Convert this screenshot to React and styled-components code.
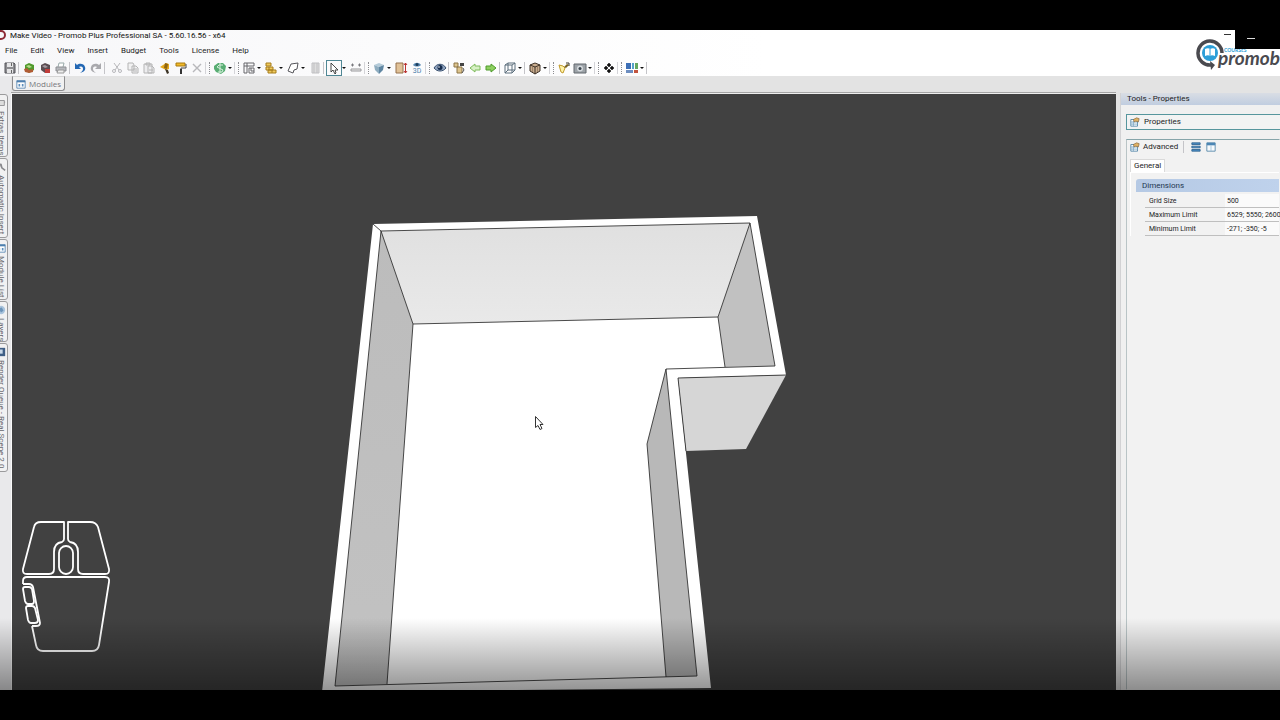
import React from 'react'
import styled, { createGlobalStyle } from 'styled-components'

const GlobalStyle = createGlobalStyle`
  * {
    box-sizing: border-box;
  }
  body {
    margin: 0;
    background: #000;
    font-family: Roboto, "Open Sans", sans-serif;
    font-size: 8px;
    line-height: 12px;
    color: #1c1c1e;
  }
  button {
    font: inherit;
    color: inherit;
    background: none;
    border: none;
    padding: 0;
    margin: 0;
  }
  svg {
    display: block;
    flex: none;
  }
`

const Screen = styled.div`
  height: 100vh;
  padding: 30px 0;
  background: #000;
  overflow: hidden;
`

const Window = styled.div`
  position: relative;
  height: 100%;
  display: flex;
  flex-direction: column;
  background: #e3e3e3;
  overflow: hidden;
`

const Shade = styled.div`
  position: absolute;
  left: 0;
  right: 0;
  bottom: 0;
  height: 72px;
  background: linear-gradient(to bottom, rgba(0, 0, 0, 0), rgba(0, 0, 0, 0.15) 35%, rgba(0, 0, 0, 0.42));
  pointer-events: none;
`

const Header = styled.header`
  position: relative;
  display: flex;
  justify-content: space-between;
  height: 46px;
  background: linear-gradient(to right, #f7f7f9, #fff 60%);
`

const HeaderMain = styled.div`
  display: flex;
  flex-direction: column;
`

const TitleBar = styled.div`
  display: flex;
  align-items: center;
  gap: 3px;
  height: 12px;
  color: #111;
  white-space: nowrap;
`

const MenuBar = styled.nav`
  display: flex;
  align-items: center;
  gap: 13px;
  height: 17px;
  padding-left: 5px;
`

const ToolBar = styled.div`
  display: flex;
  align-items: center;
  height: 17px;
  padding-left: 2px;
`

const Tool = styled.button`
  display: flex;
  align-items: center;
  height: 16px;
  opacity: ${(p) => (p.$dim ? 0.6 : 1)};
`

const Glyph = styled.span`
  display: flex;
  align-items: center;
  justify-content: center;
  width: 16px;
  height: 16px;
  border: 1px solid ${(p) => (p.$active ? '#4f8795' : 'transparent')};
`

const Caret = styled.span`
  width: 6px;
  &::after {
    content: '';
    display: block;
    width: 0;
    border: 2px solid transparent;
    border-top-color: #111;
    border-bottom: none;
  }
`

const Separator = styled.span`
  width: ${(p) => (p.$wide ? 5 : 3)}px;
  height: 12px;
  border-left: 1px solid #c4c4c8;
`

const Grip = styled.span`
  width: 7px;
  height: 12px;
  border-left: 1px solid #d4d4d8;
  display: flex;
  justify-content: center;
  &::after {
    content: '';
    border-left: 1px dotted #8c8c90;
  }
`

const Brand = styled.div`
  display: flex;
  flex: none;
  width: 84px;
  padding-top: 9px;
  overflow: hidden;
`

const CaptionButton = styled.button`
  position: absolute;
  top: 0;
  right: 0;
  width: 45px;
  height: 19px;
  background: #000;
  &::before {
    content: '';
    position: absolute;
    left: 12px;
    top: 8px;
    width: 8px;
    height: 1px;
    background: #ddd;
  }
  &::after {
    content: '';
    position: absolute;
    left: -11px;
    top: 4px;
    width: 7px;
    height: 1px;
    background: #333;
  }
`

const Main = styled.main`
  flex: 1;
  display: flex;
  min-height: 0;
`

const Rail = styled.aside`
  width: 11px;
  flex: none;
  padding-top: 18px;
  overflow: hidden;
  background: #e9e9eb;
`

const RailTab = styled.button`
  display: flex;
  align-items: center;
  gap: 3px;
  width: 14px;
  height: ${(p) => p.$size}px;
  margin-left: -6px;
  padding: 3px 0;
  border: 1px solid #9a9a9c;
  border-radius: 0 3px 3px 0;
  background: #f1f1f2;
  color: #66666b;
  writing-mode: vertical-rl;
  white-space: nowrap;
  margin-bottom: 1px;
`

const Workspace = styled.section`
  flex: 1;
  display: flex;
  flex-direction: column;
  min-width: 0;
`

const TabStrip = styled.div`
  display: flex;
  align-items: flex-start;
  height: 17px;
  padding-left: 1px;
  border-bottom: 1px solid #a5a5a5;
`

const DocTab = styled.button`
  display: flex;
  align-items: center;
  gap: 3px;
  height: 15px;
  padding: 0 3px;
  border: 1px solid #8d8d8f;
  border-top-color: #d5d5d5;
  border-radius: 0 0 3px 3px;
  background: #f1f1f1;
  color: #77777c;
  font-family: "Open Sans", sans-serif;
`

const Viewport = styled.div`
  position: relative;
  flex: 1;
  min-height: 0;
  border-left: 1px solid #fafafa;
  border-top: 1px solid #eee;
  background: #414141;
  svg {
    width: 100%;
    height: 100%;
  }
`

const MouseHint = styled.div`
  position: absolute;
  left: 9px;
  bottom: 37px;
  width: 90px;
  height: 133px;
`

const Panel = styled.aside`
  flex: none;
  width: 164px;
  padding-top: 17px;
  display: flex;
  flex-direction: column;
  overflow: hidden;
`

const PanelBody = styled.div`
  flex: 1;
  display: flex;
  flex-direction: column;
  margin-left: 4px;
  border-left: 1px solid #d2d2d4;
  background: #f0f0f0;
`

const PanelTitle = styled.h2`
  margin: 0;
  padding-left: 6px;
  height: 12px;
  font-size: 8px;
  font-weight: 400;
  background: linear-gradient(to bottom, #d9dde4, #c0cde0);
`

const PanelButton = styled.button`
  display: flex;
  align-items: center;
  gap: 4px;
  height: 16px;
  margin: 9px 0 9px 5px;
  padding-left: 3px;
  border: 1px solid #56969d;
  border-right: none;
  background: #f2f3f3;
`

const PropertySheet = styled.div`
  flex: 1;
  margin-left: 5px;
  border: 1px solid #86a5aa;
  border-color: #86a5aa transparent transparent #b9c4c6;
  background: #f2f2f2;
`

const SheetTools = styled.div`
  display: flex;
  align-items: center;
  gap: 5px;
  height: 14px;
  padding-left: 3px;
`

const SheetButton = styled.button`
  display: flex;
  align-items: center;
  gap: 3px;
`

const SheetTab = styled.button`
  display: block;
  margin: 5px 0 0 3px;
  padding: 0 3px;
  height: 13px;
  border: 1px solid #dadada;
  border-bottom: none;
  background: #fff;
`

const Sheet = styled.div`
  margin-left: 3px;
  padding: 6px 0 0 5px;
  border-left: 1px solid #fff;
  border-top: 1px solid #fff;
`

const Grid = styled.table`
  width: 100%;
  border-spacing: 0;
  table-layout: fixed;
  font-size: 7px;
`

const Column = styled.col`
  width: ${(p) => p.$width}px;
`

const GroupHead = styled.th`
  height: 15px;
  padding: 0 0 0 6px;
  text-align: left;
  font-size: 8px;
  font-weight: 400;
  border-bottom: 2px solid #f2f2f2;
  border-radius: 3px 0 0 0;
  background: linear-gradient(to right, #b5c9e4, #bfd2ec);
  color: #1e3550;
`

const Indent = styled.td`
  padding: 0;
`

const Name = styled.th`
  height: 14px;
  padding: 0 0 0 4px;
  font-weight: 400;
  text-align: left;
  border-bottom: 1px solid #bfbfbf;
`

const Value = styled.td`
  padding: 0 0 0 2px;
  white-space: nowrap;
  border-bottom: 1px solid #bfbfbf;
  background: #fafafa;
`

const menus = ['File', 'Edit', 'View', 'Insert', 'Budget', 'Tools', 'License', 'Help']

// every drawing lives in a 12x12 box
const glyphs = {
  save: (
    <>
      <path d="M1 1h9l1 1v9H1z" fill="#8c8c90" stroke="#55555a" />
      <path d="M3 1h6v4H3zM3 7h6v4H3z" fill="#e4e4e6" />
      <path d="M7 8h1v3H7zM7 1h1v3H7z" fill="#666" />
    </>
  ),
  green: (
    <>
      <path d="M2 3l4-2 5 2v5l-5 3-4-3z" fill="#4f9a2c" />
      <path d="M3 4l3-1 3 2-3 1z" fill="#b6d98a" />
      <path d="M1 7l3-1 2 2 4-1v3l-4 1-4-1z" fill="#b05c34" />
    </>
  ),
  red: (
    <>
      <path d="M2 3l4-2 5 2v5l-5 3-4-3z" fill="#5b4d52" />
      <path d="M3 4l3-1 3 2-3 1z" fill="#a49aa0" />
      <path d="M6 7h5v4H6z" fill="#c03d3a" />
    </>
  ),
  print: (
    <>
      <path d="M3 5l1-4h5l-1 4" fill="#fff" stroke="#9aa" />
      <path d="M1 5h10v4H1z" fill="#b6b8bd" stroke="#8d8f94" />
      <path d="M3 8h6v3H2z" fill="#eee" stroke="#999" />
    </>
  ),
  undo: <path d="M1 1v6h6L5 5c3-1 4 0 4 2 0 1-1 3-3 4 4-1 6-3 5-6C10 1 5 1 3 3z" fill="#2468b4" />,
  redo: <path d="M11 1v6H5l2-2C4 4 3 5 3 7c0 1 1 3 3 4-4-1-6-3-5-6 1-4 6-4 8-2z" fill="#a9a9ad" />,
  cut: (
    <g fill="none" stroke="#8d8d92">
      <path d="M3 1l5 7M9 1L4 8" />
      <circle cx="3" cy="9" r="1.5" />
      <circle cx="9" cy="9" r="1.5" />
    </g>
  ),
  copy: <path d="M1 1h5l1 2v5H1zM5 4h4l2 2v5H5zM6 7h4M6 9h4" fill="#eee" stroke="#888" />,
  paste: <path d="M1 2h8v9H1zM3 1h4v2H3zM5 4h4l2 2v5H5zM6 8h4" fill="#e6e6e8" stroke="#888" />,
  brush: (
    <>
      <path d="M1 5l6-4 3 1v5L7 8z" fill="#e5a91c" />
      <path d="M6 1l3 1-1 5-3-1z" fill="#8e6412" />
      <path d="M6 7l3 1 1 3-2 1z" fill="#3c3425" />
    </>
  ),
  roller: (
    <>
      <path d="M1 1h9v3H1z" fill="#f0b928" stroke="#a8780f" />
      <path d="M11 2v4H6v2" fill="none" stroke="#444" />
      <path d="M5 7h2v5H5z" fill="#333" />
    </>
  ),
  remove: <path d="M2 2l8 8M10 2l-8 8" stroke="#8d8d92" strokeWidth="1.4" />,
  money: (
    <>
      <path d="M0 4l4-3h5l3 3-1 5-4 3-5-2-2-3z" fill="#58ad73" />
      <path d="M9 3H5L3 5l6 3-1 2H4M6 1v10" fill="none" stroke="#d6f0dc" />
    </>
  ),
  plan: (
    <g fill="none" stroke="#66666b">
      <path d="M1 11V1h10v3H4v7zM1 4h3M4 1v3" />
      <path d="M6 6h5v5H6zM8 6v3h3" />
    </g>
  ),
  bricks: (
    <>
      <path d="M1 1h5v3H1zM1 5h7v3H1zM3 8h8v3H3z" fill="#efc95c" stroke="#a57c1c" />
      <path d="M4 5v3M7 8v3" stroke="#a57c1c" />
    </>
  ),
  shape: <path d="M4 2l7-1-1 6-3 1-1 3-5-2z" fill="#fff" stroke="#55555a" />,
  column: <path d="M3 1h7v10H3zM5 1v10M8 1v10" fill="#ccc" stroke="#99999d" />,
  pointer: <path d="M3 1v9l2-2 2 4 1-1-1-3h3z" fill="#fff" stroke="#333" strokeWidth="0.9" />,
  measure: (
    <>
      <path d="M1 3h3M8 3h3M2.500 1.500v3M9.500 1.500v3" stroke="#77777c" />
      <path d="M1 7h10v2H1z" fill="#eee" stroke="#99999c" />
    </>
  ),
  cube: (
    <>
      <path d="M1 3l5-2 5 2-5 2z" fill="#b4cbd9" />
      <path d="M1 3l5 2v7L2 8z" fill="#8fadc0" />
      <path d="M11 3L6 5v7l4-4z" fill="#5f86a2" />
    </>
  ),
  door: (
    <>
      <path d="M1 1h7v10H1z" fill="#e0c197" stroke="#96734f" />
      <path d="M10.500 1v10M9 3l1.500-2L12 3M9 9l1.500 2L12 9" stroke="#b33" fill="none" />
    </>
  ),
  eye: (
    <>
      <path d="M0 6c3-5 9-5 12 0-3 4-9 4-12 0z" fill="#8fa3bf" stroke="#38506f" />
      <circle cx="6" cy="5.500" r="2.500" fill="#152b4c" />
      <circle cx="5" cy="5" r="0.800" fill="#fff" />
    </>
  ),
  views: (
    <>
      <path d="M1 1h4v4H1zM4 5h5v6H4z" fill="#dcc48e" stroke="#8c7447" />
      <path d="M7 1h4v3H7z" fill="#444" />
      <path d="M10 6l1 2-2 3" fill="none" stroke="#555" />
    </>
  ),
  left: <path d="M1 6l5-4v2h5v4H6v2z" fill="#d6f0c4" stroke="#7fbb5c" />,
  right: <path d="M11 6L6 2v2H1v4h5v2z" fill="#8ed060" stroke="#4f9a2c" />,
  wire: <path d="M1 3h7v8H1zM1 3l3-2h7L8 3M11 1v7l-3 3M4 1v7M1 11l3-3h7" fill="none" stroke="#5c6f7c" />,
  box: (
    <>
      <path d="M1 3l5-2 5 2v6l-5 3-5-3z" fill="#c9ad8e" stroke="#3e3228" />
      <path d="M1 3l5 2 5-2M6 5v7" fill="none" stroke="#3e3228" />
      <path d="M3.500 4v6M8.500 4v6" stroke="#8a7058" strokeWidth="0.700" />
    </>
  ),
  lamp: (
    <>
      <path d="M1 3l4 1 2 2-2 5-2-1z" fill="#fff3a8" stroke="#c19a2c" />
      <path d="M6 5l3-3 2 1-3 3z" fill="#7a6420" />
      <path d="M8 1h3v3" fill="none" stroke="#3e3a30" />
    </>
  ),
  camera: (
    <>
      <path d="M0 2h12v9H0z" fill="#9da3a8" stroke="#63696e" />
      <circle cx="6" cy="6.500" r="3" fill="#d5dade" />
      <circle cx="6" cy="6.500" r="1.500" fill="#3c464e" />
    </>
  ),
  diamonds: <path d="M6 1l2 2-2 2-2-2zM6 7l2 2-2 2-2-2zM3 4l2 2-2 2-2-2zM9 4l2 2-2 2-2-2z" fill="#111" stroke="#111" strokeWidth="0.500" />,
  blocks: (
    <>
      <path d="M0 1h5v6H0z" fill="#3d6fb6" />
      <path d="M6 1h2v6H6z" fill="#55a2c8" />
      <path d="M9 1h3v6H9z" fill="#64a860" />
      <path d="M0 8h7v3H0z" fill="#6d8ec0" />
      <path d="M8 8h4v3H8z" fill="#c2543e" />
    </>
  ),
  sheet: (
    <>
      <path d="M1 3h8v8H1z" fill="#fff" stroke="#4b7fa4" />
      <path d="M1 6h8M4 5v6M1 8.500h8" stroke="#7aa6c4" />
      <path d="M4 3l4-2 3 1-1 4-3-1-2 1z" fill="#e1b365" stroke="#76552a" strokeWidth="0.700" />
    </>
  ),
  list: <path d="M1 1h10v2H1zM1 5h10v2H1zM1 9h10v2H1z" fill="#4c8fc6" stroke="#2c628f" />,
  window: (
    <>
      <path d="M1 1h10v10H1z" fill="#f7fafc" stroke="#4b7fa4" />
      <path d="M1 1h10v3H1z" fill="#4c86b4" />
      <path d="M6 4v7" stroke="#9cbfd8" />
    </>
  ),
  modules: (
    <>
      <path d="M1 2h10v9H1z" fill="#fff" stroke="#4d7fae" />
      <path d="M1 2h10v2H1z" fill="#4d7fae" />
      <path d="M3 6h2v3H3zM7 6h2v3H7z" fill="#5c8fbe" />
    </>
  ),
  clip: <path d="M2 3h8v6H2zM4 3v6M10 5h1" fill="#ddd" stroke="#88888c" />,
  wrench: <path d="M2 2l4 1 1 4 4 3M2 6l3-2" fill="none" stroke="#88888c" strokeWidth="2" />,
  layers: (
    <>
      <circle cx="6" cy="6" r="5" fill="#a9c3dc" />
      <path d="M3 4l4-1 2 4-3 2z" fill="#6c93b8" />
    </>
  ),
  render: (
    <>
      <path d="M1 1h10v10H1z" fill="#3f5f86" />
      <path d="M3 3h5v5H3z" fill="#c9d8e8" />
    </>
  ),
}

const Icon = ({ name, size = 12 }) => (
  <svg width={size} height={size} viewBox="0 0 12 12" fill="none" overflow="visible" aria-hidden="true">
    {name === 'threeD' ? (
      <>
        <path d="M2 3c2-3 6-3 8 0-2 2-6 2-8 0z" fill="#5c8bb4" />
        <circle cx="6" cy="2.500" r="1.500" fill="#1c3c5c" />
        <text x="6" y="11" fontSize="7" textAnchor="middle" fill="#4b82ab">3D</text>
      </>
    ) : (
      glyphs[name]
    )}
  </svg>
)

// '|' thin separator, '||' wide separator, ':' group grip, '+' suffix adds a drop-down caret
const tools = [
  'save', '|', 'green', 'red', 'print', '|', 'undo', 'redo', '||', 'cut', 'copy', 'paste', 'brush', 'roller', 'remove',
  ':', 'money+', ':', 'plan+', 'bricks+', 'shape+', 'column', '|', 'pointer+', 'measure',
  ':', 'cube+', 'door', 'threeD', ':', 'eye', '|', 'views', 'left', 'right', '|', 'wire+', '|', 'box+',
  ':', 'lamp', 'camera+', ':', 'diamonds', ':', 'blocks+', '|',
]

const dimmed = ['cut', 'copy', 'paste', 'remove', 'column']

const railTabs = [
  { label: 'Extras Items', icon: 'clip', size: 63 },
  { label: 'Automatic Insert', icon: 'wrench', size: 80 },
  { label: 'Module List', icon: 'modules', size: 61 },
  { label: 'Layers', icon: 'layers', size: 41 },
  { label: 'Render Queue - Real Scene 2.0', icon: 'render', size: 129 },
]

const limits = [
  ['Grid Size', '500'],
  ['Maximum Limit', '6529; 5550; 2600'],
  ['Minimum Limit', '-271; -350; -5'],
]

const ToolItem = ({ item }) => {
  if (item === '|' || item === '||') return <Separator $wide={item === '||'} />
  if (item === ':') return <Grip />
  const name = item.replace('+', '')
  return (
    <Tool aria-label={name} $dim={dimmed.includes(name)}>
      <Glyph $active={name === 'pointer'}>
        <Icon name={name} />
      </Glyph>
      {item.endsWith('+') && <Caret />}
    </Tool>
  )
}

const Logo = () => (
  <svg width="100" height="36" viewBox="0 0 100 36" fill="none">
    <path d="M26 14A12 12 0 1 0 15 26" stroke="#4a4a4f" strokeWidth="3.500" />
    <path d="M14 22l5 4-4 5z" fill="#4a4a4f" />
    <circle cx="14" cy="14" r="8" fill="#2d9fd8" />
    <path d="M9 10c2-1 4-1 5 0 2-1 4-1 5 0v7c-2-1-4-1-5 0-1-1-3-1-5 0z" fill="#fff" />
    <path d="M14 10v7" stroke="#2d9fd8" />
    <text x="28" y="13" fontSize="5" fontWeight="700" fill="#2d9fd8" fontFamily="Lato">COURSES</text>
    <text x="22" y="26" fontSize="19" fontWeight="700" fontStyle="italic" fill="#4a4a4f" fontFamily="Lato">promob</text>
  </svg>
)

const Room = () => (
  <svg viewBox="12 94 1104 596" preserveAspectRatio="xMidYMid slice">
    <defs>
      <linearGradient id="side" x1="0" y1="0" x2="0" y2="1">
        <stop offset="0" stopColor="#bcbcbc" />
        <stop offset="1" stopColor="#c2c2c2" />
      </linearGradient>
      <linearGradient id="back" x1="0" y1="0" x2="0" y2="1">
        <stop offset="0" stopColor="#e0e0e0" />
        <stop offset="1" stopColor="#e9e9e9" />
      </linearGradient>
    </defs>
    <path d="M373 224L757 216L786 375L678 378L711 688L322 692z" fill="#fff" />
    <path d="M678 378L786 375L746 449L686 451z" fill="#d6d6d6" />
    <path d="M381 231L750 223L718 317L413 324z" fill="url(#back)" />
    <path d="M381 231L413 324L387 684L335 686z" fill="url(#side)" />
    <path d="M750 223L775 366L725 367L718 317z" fill="#c1c1c1" />
    <path d="M666 369L697 676L666 677L647 444z" fill="#b8b8b8" />
    <g stroke="#2c2c2c" strokeWidth="1" strokeOpacity="0.850" fill="none">
      <path d="M373 224L381 231L750 223L775 366L666 369L697 676L335 686L381 231" />
      <path d="M381 231L413 324L387 684M413 324L718 317L750 223M718 317L725 367" />
      <path d="M666 369L647 444L666 677" />
      <path d="M686 451L678 378L786 375" />
    </g>
    <path d="M535.500 416.500v11l2.500-2 2 4 2-1-2-4h3z" fill="#fff" stroke="#333" />
  </svg>
)

const MouseDrawing = () => (
  <svg viewBox="0 0 90 133" fill="none" stroke="#fff" strokeWidth="1.800" strokeLinejoin="round">
    <path d="M43 2H20q-6 0-7 5L2 49q-1 5 4 5h22q5 0 5-5V32q0-9 8-10 2-1 2-3z" />
    <path d="M47 2h22q6 0 8 5l11 42q1 5-4 5H62q-5 0-5-5V32q0-9-8-10-2-1-2-3z" />
    <rect x="38" y="26" width="14" height="28" rx="7" />
    <path d="M2 64v-3q0-4 4-4h78q5 0 4 5L78 125q-1 6-7 6H22q-6 0-7-6l-4-19" />
    <path d="M2 64h6q3 0 4 3l7 36q0 3-4 3h-4" />
    <path d="M4 67h4q2 0 3 2l2 12q0 3-2 3H7q-2 0-3-3L2 69q0-2 2-2z" />
    <path d="M7 86h4q2 0 3 2l3 12q0 3-3 3h-4q-2 0-3-3L5 88q0-2 2-2z" />
  </svg>
)

const App = () => {
  return (
    <Screen>
      <GlobalStyle />
      <Window>
        <Header>
          <HeaderMain>
            <TitleBar>
              <svg width="7" height="12" viewBox="0 0 7 12">
                <circle cx="1" cy="5" r="4" fill="none" stroke="#8e2a35" strokeWidth="2" />
              </svg>
              Make Video - Promob Plus Professional SA - 5.60.16.56 - x64
            </TitleBar>
            <MenuBar>
              {menus.map((m) => (
                <button key={m}>{m}</button>
              ))}
            </MenuBar>
            <ToolBar>
              {tools.map((t, i) => (
                <ToolItem key={i} item={t} />
              ))}
            </ToolBar>
          </HeaderMain>
          <Brand>
            <Logo />
          </Brand>
          <CaptionButton aria-label="Minimize" />
        </Header>
        <Main>
          <Rail>
            {railTabs.map((t) => (
              <RailTab key={t.label} $size={t.size}>
                <Icon name={t.icon} size={10} />
                {t.label}
              </RailTab>
            ))}
          </Rail>
          <Workspace>
            <TabStrip>
              <DocTab>
                <Icon name="modules" size={10} />
                Modules
              </DocTab>
            </TabStrip>
            <Viewport>
              <Room />
              <MouseHint>
                <MouseDrawing />
              </MouseHint>
            </Viewport>
          </Workspace>
          <Panel>
            <PanelBody>
              <PanelTitle>Tools - Properties</PanelTitle>
              <PanelButton>
                <Icon name="sheet" size={10} />
                Properties
              </PanelButton>
              <PropertySheet>
                <SheetTools>
                  <SheetButton>
                    <Icon name="sheet" size={10} />
                    Advanced
                  </SheetButton>
                  <Separator />
                  <SheetButton aria-label="List">
                    <Icon name="list" size={10} />
                  </SheetButton>
                  <SheetButton aria-label="Window">
                    <Icon name="window" size={10} />
                  </SheetButton>
                </SheetTools>
                <SheetTab>General</SheetTab>
                <Sheet>
                  <Grid>
                    <colgroup>
                      <Column $width={9} />
                      <Column $width={80} />
                      <col />
                    </colgroup>
                    <thead>
                      <tr>
                        <GroupHead colSpan={3}>Dimensions</GroupHead>
                      </tr>
                    </thead>
                    <tbody>
                      {limits.map(([name, value]) => (
                        <tr key={name}>
                          <Indent />
                          <Name scope="row">{name}</Name>
                          <Value>{value}</Value>
                        </tr>
                      ))}
                    </tbody>
                  </Grid>
                </Sheet>
              </PropertySheet>
            </PanelBody>
          </Panel>
        </Main>
        <Shade />
      </Window>
    </Screen>
  )
}

export default App
